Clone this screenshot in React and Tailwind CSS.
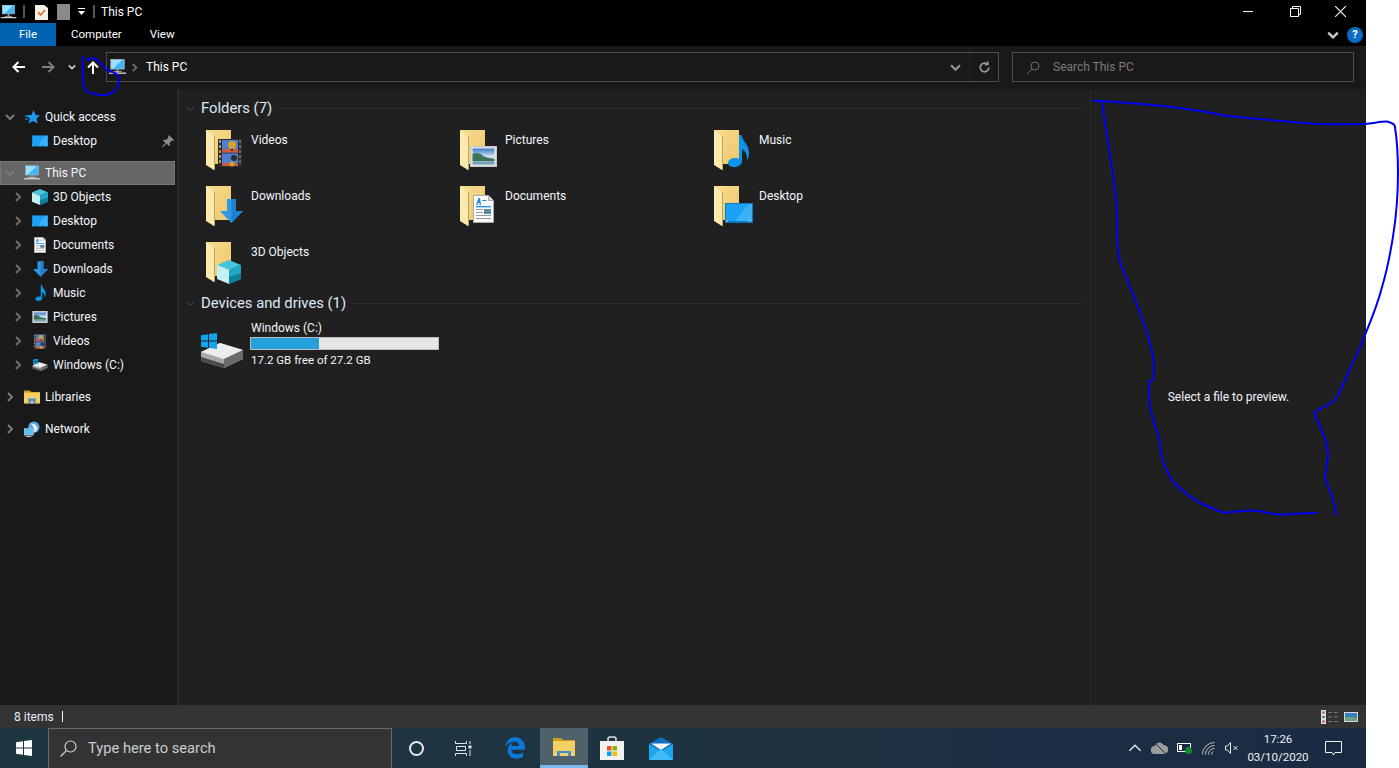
import { FaEdgeLegacy } from "react-icons/fa6";

const font = "font-['Roboto','Noto_Sans',sans-serif]";

function Chevron({ dir = "right", className = "", size = 10, width = 2 }) {
  const pts = {
    right: "3,1 7,5 3,9",
    down: "1,3 5,7 9,3",
    up: "1,7 5,3 9,7",
  };
  return (
    <svg className={className} width={size} height={size} viewBox="0 0 10 10" fill="none" stroke="currentColor" strokeWidth={width}>
      <polyline points={pts[dir]} />
    </svg>
  );
}

function Film(props) {
  return (
    <svg {...props} viewBox="0 0 24 28">
      <rect width="24" height="28" fill="#2c2c2c" />
      <rect x="4" y="1" width="16" height="12.500" fill="#4f7fd0" />
      <rect x="4" y="14.500" width="16" height="12.500" fill="#4f7fd0" />
      <rect x="4" y="10" width="16" height="3.500" fill="#d2593c" />
      <rect x="4" y="24" width="16" height="3" fill="#d2593c" />
      <circle cx="14" cy="6" r="4" fill="#d8a02a" />
      <rect x="13" y="10" width="2" height="2" fill="#2b2b2b" />
      <circle cx="16" cy="19" r="3" fill="#2b2b2b" />
      <circle cx="14" cy="25" r="2.500" fill="#d8a02a" />
      {[1, 6, 11, 16, 21].map((y) => (
        <g key={y}>
          <rect x="1" y={y} width="2" height="3" fill="#a89a6a" />
          <rect x="21" y={y} width="2" height="3" fill="#6b6b6b" />
        </g>
      ))}
    </svg>
  );
}

function Picture(props) {
  return (
    <svg {...props} viewBox="0 0 27 21">
      <defs>
        <linearGradient id="sky" x1="0" y1="0" x2="0" y2="1">
          <stop offset="0" stopColor="#3a78c0" />
          <stop offset="0.5" stopColor="#cfe3ee" />
          <stop offset="1" stopColor="#5e92a8" />
        </linearGradient>
      </defs>
      <rect width="27" height="21" fill="#c9c9c9" />
      <rect x="1.500" y="1.500" width="24" height="18" fill="#f4f4f4" />
      <rect x="2.500" y="2.500" width="22" height="16" fill="url(#sky)" />
      <path d="M2.500 8 C7 6 10 7 13 10 C17 12 21 12 24.500 13 V15 H2.500Z" fill="#3f7358" />
    </svg>
  );
}

function Note(props) {
  return (
    <svg {...props} viewBox="0 0 21 32">
      <path fill="#0a94e8" d="M11 0h2.500c.6 6 7.500 9 7.500 18 0 3-.8 5.500-2 7.500.6-6-1.800-9.500-5-11.500V26c0 3.500-3.500 6-7.500 6C3 32 0 30.500 0 28c0-3 3.500-5 7-5 1.500 0 3 .3 4 1Z" />
    </svg>
  );
}

function ArrowDown(props) {
  return (
    <svg {...props} viewBox="0 0 23 24">
      <polygon points="7,0 16,0 16,12 23,12 11.5,24 0,12 7,12" fill="#2f97e8" />
      <polygon points="11.500,0 16,0 16,12 23,12 11.500,24" fill="#1f7fd0" />
    </svg>
  );
}

function Doc(props) {
  return (
    <svg {...props} viewBox="0 0 21 28">
      <path d="M.5.5h15l5 5v22H.5Z" fill="#fafafa" stroke="#a9a9a9" />
      <path d="M15.500.5v5h5" fill="#dcdcdc" stroke="#a9a9a9" />
      <path d="M3 10 5.500 3H7l1 7H6.500v-2H5l-.7 2Z" fill="#1c8ee0" />
      <rect x="9.500" y="5" width="4" height="1" fill="#1c8ee0" />
      <rect x="3" y="11" width="15" height="1.300" fill="#1c8ee0" />
      <rect x="3" y="14" width="7" height="1" fill="#999" />
      <rect x="11" y="14" width="7" height="5" fill="#5b8aa0" />
      <rect x="3" y="17" width="7" height="1" fill="#999" />
      <rect x="3" y="20" width="15" height="1" fill="#999" />
      <rect x="3" y="23" width="15" height="1" fill="#999" />
    </svg>
  );
}

function Desk(props) {
  return (
    <svg {...props} viewBox="0 0 28 20">
      <rect width="28" height="20" fill="#0b78c6" />
      <rect x="1" y="1" width="26" height="17" fill="#1ba2f6" />
      <path d="M10 18 24 1h3v17Z" fill="#3db2f8" />
      <rect x="1" y="17.500" width="1.500" height="1" fill="#fff" />
      <rect x="23" y="17.500" width="1" height="1" fill="#fff" />
      <rect x="25" y="17.500" width="1" height="1" fill="#fff" />
    </svg>
  );
}

function Cube(props) {
  return (
    <svg {...props} viewBox="0 0 24 24">
      <polygon points="12,0 24,5 12,10 0,5" fill="#45c6dc" />
      <polygon points="0,5 12,10 12,24 0,19" fill="#c4f0f5" />
      <polygon points="24,5 12,10 12,24 24,19" fill="#1fa9c6" />
      <polygon points="12,17 24,13 24,19 12,24" fill="#0b8197" />
    </svg>
  );
}

function Monitor(props) {
  return (
    <svg {...props} viewBox="0 0 20 18">
      <rect x="2" y="0" width="16" height="11.500" fill="#45b6f5" stroke="#c4c4c4" strokeWidth=".6" />
      <path d="M2.500.500h13L5 11H2.500Z" fill="#9be0ff" />
      <rect x="9" y="11.500" width="2" height="3" fill="#9a9a9a" />
      <rect x="5" y="14" width="10" height="1" fill="#c8c8c8" />
      <rect x="0" y="15.500" width="20" height="1.500" fill="#dcdcdc" />
    </svg>
  );
}

function Folder() {
  return (
    <>
      <defs>
        <linearGradient id="fback" x1="0" y1="0" x2="1" y2="1">
          <stop offset="0" stopColor="#f7dc94" />
          <stop offset="1" stopColor="#eec768" />
        </linearGradient>
      </defs>
      <rect x="1" y="2" width="25" height="34" fill="url(#fback)" />
      <polygon points="1,2 9,8 9,42 1,37" fill="#fbe9ae" />
      <polygon points="9,8 10,8 10,42 9,42" fill="#c9a24e" />
    </>
  );
}

function FolderTile({ name, children }) {
  return (
    <div className="flex h-[46px] items-start">
      <svg width="44" height="46" viewBox="0 0 44 46" className="shrink-0">
        <Folder />
        {children}
      </svg>
      <span className="ml-[2px] mt-[4px] text-xs leading-4 text-[#f2f6fb]">{name}</span>
    </div>
  );
}

function WinPanes({ fill = "#fff", ...props }) {
  return (
    <svg {...props} viewBox="0 0 16 16" fill={fill}>
      <polygon points="0,2.200 7,1.200 7,7.500 0,7.500" />
      <polygon points="8,1 16,0 16,7.500 8,7.500" />
      <polygon points="0,8.500 7,8.500 7,14.800 0,13.800" />
      <polygon points="8,8.500 16,8.500 16,16 8,15" />
    </svg>
  );
}

function Drive({ small }) {
  return (
    <svg width={small ? 16 : 46} height={small ? 16 : 36} viewBox="0 0 46 36" className="shrink-0">
      <polygon points="2,19 21,10 44,17 44,26 25,35 2,28" fill="#a8a8a8" />
      <polygon points="2,19 21,10 44,17 25,26" fill="#ececec" />
      <polygon points="25,26 44,17 44,26 25,35" fill="#6a6a6a" />
      <polygon points="2,24 25,31 25,35 2,28" fill="#4a4a4a" />
      <circle cx="16" cy="27" r="1" fill="#37d04a" />
      <WinPanes x="2" y="0" width="16" height="16" fill="#10a5ee" />
    </svg>
  );
}

function LibIcon({ size = 16 }) {
  return (
    <svg width={size} height={size} viewBox="0 0 22 18">
      <path d="M0 0h8l2 2h12v2H0Z" fill="#d59d1c" />
      <rect y="3" width="22" height="15" fill="#f4cf63" />
      <path d="M6 18v-7h10v7h-3v-3.500H9V18Z" fill="#3f8fd6" />
    </svg>
  );
}

function NetIcon() {
  return (
    <svg width="17" height="17" viewBox="0 0 17 17">
      <circle cx="10.500" cy="6" r="6" fill="#5aa9dc" />
      <path d="M7 2c3 0 6 1 7 4s-2 5-4 6c2-3 1-6-3-10Z" fill="#e9f3f9" />
      <rect x="0" y="7.500" width="10" height="7" fill="#5fc0f2" stroke="#c0c0c0" strokeWidth=".6" />
      <rect x="2" y="15.500" width="6" height="1" fill="#d0d0d0" />
    </svg>
  );
}

const quickItems = [{ name: "Desktop", Icon: Desk, w: 16, h: 12, pin: true }];

const pcItems = [
  { name: "3D Objects", Icon: Cube, w: 16, h: 16 },
  { name: "Desktop", Icon: Desk, w: 16, h: 12 },
  { name: "Documents", Icon: Doc, w: 12, h: 16 },
  { name: "Downloads", Icon: ArrowDown, w: 15, h: 16 },
  { name: "Music", Icon: Note, w: 11, h: 16 },
  { name: "Pictures", Icon: Picture, w: 16, h: 12 },
  { name: "Videos", Icon: Film, w: 14, h: 15 },
];

function NavChild({ name, children, arrow = true, pin }) {
  return (
    <div className="flex h-6 items-center pl-3">
      <span className="flex w-3 shrink-0 justify-center text-[#6e6e6e]">{arrow && <Chevron />}</span>
      <span className="ml-2 flex w-4 shrink-0 items-center justify-center">{children}</span>
      <span className="ml-[5px] text-xs text-[#f2f6fb]">{name}</span>
      {pin && (
        <svg className="ml-auto mr-[3px]" width="12" height="12" viewBox="0 0 12 12" fill="#8b8b8b">
          <path d="M7 0l5 5-1 1-1-.500-2.500 2.500.5 2-1 1-2.500-2.500L1 12l-1 0 0-.500 3.500-3.500L1 5.500l1-1 2 .500L6.500 2.500 6 1.500Z" />
        </svg>
      )}
    </div>
  );
}

function NavRoot({ name, open, selected, icon }) {
  return (
    <div className={`flex h-6 items-center pl-1 ${selected ? "mr-[2px] border border-[#777] bg-[#666] pl-[3px]" : ""}`}>
      <span className="flex w-3 shrink-0 justify-center text-[#7a7a7a]">
        <Chevron dir={open ? "down" : "right"} />
      </span>
      <span className="ml-2 flex w-4 shrink-0 items-center justify-center">{icon}</span>
      <span className="ml-[5px] text-xs text-[#f2f6fb]">{name}</span>
    </div>
  );
}

function Sidebar() {
  return (
    <div className="w-[177px] shrink-0 bg-[#191919] pt-4">
      <NavRoot
        name="Quick access"
        open
        icon={
          <svg width="15" height="14" viewBox="0 0 15 14">
            <polygon points="8.500,0 10.500,5 15,5.500 11.500,8.500 12.500,13.500 8,11 3.500,13.500 4.800,8.500 1,5.500 6.500,5" fill="#1c9bf0" />
            <path d="M0 6h4M0 9h3" stroke="#1c9bf0" />
          </svg>
        }
      />
      {quickItems.map(({ name, Icon, w, h, pin }) => (
        <NavChild key={name} name={name} arrow={false} pin={pin}>
          <Icon width={w} height={h} />
        </NavChild>
      ))}
      <div className="mt-2">
        <NavRoot name="This PC" open selected icon={<Monitor width="17" height="16" />} />
      </div>
      {pcItems.map(({ name, Icon, w, h }) => (
        <NavChild key={name} name={name}>
          <Icon width={w} height={h} />
        </NavChild>
      ))}
      <NavChild name="Windows (C:)">
        <Drive small />
      </NavChild>
      <div className="mt-2">
        <NavRoot name="Libraries" icon={<LibIcon />} />
      </div>
      <div className="mt-2">
        <NavRoot name="Network" icon={<NetIcon />} />
      </div>
    </div>
  );
}

function SectionHead({ title }) {
  return (
    <div className="flex h-[22px] items-center">
      <span className="ml-[7px] flex w-[15px] text-[#555]">
        <Chevron dir="down" size={9} width={1} />
      </span>
      <span className="text-[14.800px] leading-[22px] text-[#dfeaf5]">{title}</span>
      <span className="ml-[6px] h-px flex-1 bg-[#2f2f2f]" />
    </div>
  );
}

function Content() {
  return (
    <div className="min-w-0 flex-1 bg-[#202020] pl-0 pr-[7px] pt-2">
      <SectionHead title="Folders (7)" />
      <div className="mt-[9px] grid grid-cols-[254px_254px_254px] gap-y-[10px] pl-[26px]">
        <FolderTile name="Videos">
          <Film x="13" y="11" width="24" height="28" />
        </FolderTile>
        <FolderTile name="Pictures">
          <Picture x="11" y="18" width="27" height="21" />
        </FolderTile>
        <FolderTile name="Music">
          <Note x="15" y="7" width="21" height="32" />
        </FolderTile>
        <FolderTile name="Downloads">
          <ArrowDown x="15" y="15" width="23" height="24" />
        </FolderTile>
        <FolderTile name="Documents">
          <Doc x="14" y="11" width="21" height="28" />
        </FolderTile>
        <FolderTile name="Desktop">
          <Desk x="12" y="19" width="28" height="20" />
        </FolderTile>
        <FolderTile name="3D Objects">
          <Cube x="12" y="20" width="24" height="24" />
        </FolderTile>
      </div>
      <div className="mt-[6px]">
        <SectionHead title="Devices and drives (1)" />
      </div>
      <div className="ml-5 mt-[6px] flex items-start">
        <div className="mt-[13px]">
          <Drive />
        </div>
        <div className="ml-[5px] text-xs leading-4 text-[#f2f6fb]">
          <div className="pl-px">Windows (C:)</div>
          <div className="mt-px h-[13px] w-[189px] border border-[#bcbcbc] bg-[#e6e6e6]">
            <div className="h-full w-[36.500%] bg-[#26a0da]" />
          </div>
          <div className="mt-[2px] pl-px text-[11.500px]">17.2 GB free of 27.2 GB</div>
        </div>
      </div>
    </div>
  );
}

function TitleBar() {
  return (
    <div className="flex h-[23px] items-center bg-black text-white">
      <Monitor width="17" height="14" />
      <span className="ml-[6px] h-[13px] w-[2px] bg-[#555]" />
      <svg className="ml-[10px]" width="13" height="16" viewBox="0 0 13 16">
        <path d="M0 1h9l4 3v12H0Z" fill="#f5f1e6" />
        <path d="M3 8l2.500 3L10 6" fill="none" stroke="#e8642c" strokeWidth="1.500" />
      </svg>
      <span className="ml-[9px] h-[16px] w-[13px] bg-[#8a8a8a]" />
      <span className="ml-[5px] flex w-[12px] flex-col items-center">
        <span className="h-px w-[7px] bg-white" />
        <svg className="mt-[2px]" width="7" height="4" viewBox="0 0 7 4" fill="#fff">
          <polygon points="0,0 7,0 3.500,4" />
        </svg>
      </span>
      <span className="ml-[6px] h-[13px] w-[2px] bg-[#555]" />
      <span className="ml-[6px] text-xs">This PC</span>
      <div className="ml-auto flex items-center">
        <span className="h-px w-[10px] bg-white" />
        <svg className="ml-[37px]" width="11" height="11" viewBox="0 0 11 11" fill="none" stroke="#fff">
          <path d="M.5 2.500h8v8h-8ZM2.500 2.500v-2h8v8h-2" />
        </svg>
        <svg className="ml-[34px] mr-[20px]" width="11" height="11" viewBox="0 0 11 11" fill="none" stroke="#fff" strokeWidth="1.100">
          <path d="M0 0l11 11M11 0 0 11" />
        </svg>
      </div>
    </div>
  );
}

function RibbonTabs() {
  return (
    <div className="flex h-[23px] items-center bg-black text-[11.500px] text-white">
      <div className="flex h-full w-[56px] items-center justify-center bg-[#0063b1]">File</div>
      <span className="ml-[15px]">Computer</span>
      <span className="ml-[28px]">View</span>
      <div className="ml-auto flex items-center">
        <Chevron dir="down" size={12} className="text-[#c8c8c8]" />
        <span className="ml-[8px] mr-[3px] flex h-4 w-4 items-center justify-center rounded-full bg-[#0a6cc4] text-[11px] font-bold leading-none">?</span>
      </div>
    </div>
  );
}

function AddressRow() {
  return (
    <div className="flex h-[43px] items-center bg-[#191919] pb-px text-white">
      <svg className="ml-[12px]" width="13" height="12" viewBox="0 0 13 12" fill="none" stroke="#fff" strokeWidth="2">
        <path d="M13 6H2M6.500 1 1.500 6l5 5" />
      </svg>
      <svg className="ml-[17px]" width="13" height="12" viewBox="0 0 13 12" fill="none" stroke="#7c7c7c" strokeWidth="2">
        <path d="M0 6h11M6.500 1l5 5-5 5" />
      </svg>
      <Chevron dir="down" size={8} className="ml-[13px] text-[#d0d0d0]" />
      <svg className="ml-[11px]" width="12" height="13" viewBox="0 0 12 13" fill="none" stroke="#fff" strokeWidth="2">
        <path d="M6 13V2M1 6.500l5-5 5 5" />
      </svg>
      <div className="ml-[7px] flex h-[30px] w-[893px] items-center border border-[#4d4d4d] pl-[2px]">
        <Monitor width="17" height="16" />
        <Chevron size={9} className="ml-[4px] text-[#6e6e6e]" />
        <span className="ml-[7px] text-xs">This PC</span>
        <Chevron dir="down" size={11} className="ml-auto text-[#9a9a9a]" />
        <span className="ml-[8px] h-full w-px bg-[#262626]" />
        <svg className="ml-[8px] mr-[7px]" width="13" height="13" viewBox="0 0 24 24" fill="none" stroke="#9a9a9a" strokeWidth="3">
          <path d="M20 12a8 8 0 1 1-3-6.200" />
          <path d="M18 1v5.500h-5.500" />
        </svg>
      </div>
      <div className="ml-[13px] flex h-[30px] w-[342px] items-center border border-[#4d4d4d]">
        <svg className="ml-[14px]" width="13" height="13" viewBox="0 0 13 13" fill="none" stroke="#6e6e6e">
          <circle cx="8" cy="5" r="4" />
          <path d="M5 8l-5 5" />
        </svg>
        <span className="ml-[13px] text-xs text-[#7a7a7a]">Search This PC</span>
      </div>
    </div>
  );
}

function StatusBar() {
  return (
    <div className="flex h-[23px] items-center bg-[#333] text-xs text-[#e8eef5]">
      <span className="ml-[14px]">8 items</span>
      <span className="ml-[8px] h-[11px] w-px bg-white" />
      <div className="ml-auto mr-2 flex items-center">
        <svg width="18" height="14" viewBox="0 0 18 14">
          <rect width="5" height="14" fill="#ddd" />
          <rect x="1.500" y="1.500" width="2" height="2" fill="#b33" />
          <rect x="1.500" y="6" width="2" height="2" fill="#555" />
          <rect x="1.500" y="10.500" width="2" height="2" fill="#b33" />
          <path d="M7 2.500h4M13 2.500h4M7 7h4M13 7h4M7 11.500h4M13 11.500h4" stroke="#777" />
        </svg>
        <svg className="ml-[5px]" width="14" height="10" viewBox="0 0 14 10">
          <rect width="14" height="10" fill="#d8d8d8" />
          <rect x="1" y="1" width="12" height="8" fill="#2e80c0" />
          <path d="M1 6c3-2 6-1 12 0v3H1Z" fill="#6f9f80" />
        </svg>
      </div>
    </div>
  );
}

function Taskbar() {
  return (
    <div className="flex h-10 items-stretch bg-gradient-to-r from-[#1e3640] via-[#1e3340] to-[#1a2a44] text-white">
      <div className="flex w-12 items-center justify-center">
        <WinPanes width="16" height="16" />
      </div>
      <div className="flex w-[344px] items-center border border-b-0 border-[#6a6a6a] bg-[#333]">
        <svg className="ml-[11px]" width="17" height="17" viewBox="0 0 17 17" fill="none" stroke="#d0d0d0" strokeWidth="1.200">
          <circle cx="10.500" cy="6.500" r="5.500" />
          <path d="M6.500 10.500l-6 6" />
        </svg>
        <span className="ml-[11px] text-[14.700px] text-[#c8ccd0]">Type here to search</span>
      </div>
      <div className="flex w-12 items-center justify-center">
        <span className="h-[15px] w-[15px] rounded-full border-2 border-[#e8e8e8]" />
      </div>
      <div className="flex w-[46px] items-center justify-center">
        <svg width="17" height="15" viewBox="0 0 17 15" fill="none" stroke="#e8e8e8">
          <path d="M.5 0v2.500h11V0M.5 15v-2.500h11V15M1.500 5.500h9v4h-9Z" />
          <rect x="13.500" y="4.500" width="3" height="3" fill="#e8e8e8" stroke="none" />
          <path d="M15 0v3M15 9v6" />
        </svg>
      </div>
      <div className="flex w-[54px] items-center justify-center pl-1">
        <FaEdgeLegacy className="text-[22px] text-[#0b78d7]" />
      </div>
      <div className="flex w-[48px] items-center justify-center border-b-[3px] border-[#76b9ed] bg-[#4f626c]">
        <svg width="22" height="18" viewBox="0 0 22 18">
          <path d="M0 0h8l2 2h12v2H0Z" fill="#d59d1c" />
          <rect y="3" width="22" height="15" fill="#f4cf63" />
          <path d="M4 18v-5h14v5h-3v-3H7v3Z" fill="#3f8fd6" />
        </svg>
      </div>
      <div className="flex w-[48px] items-center justify-center">
        <svg width="24" height="24" viewBox="0 0 24 24">
          <path d="M8 6V3a2 2 0 0 1 2-2h4a2 2 0 0 1 2 2v3" fill="none" stroke="#e0e0e0" strokeWidth="1.500" />
          <rect y="5" width="24" height="19" fill="#f1f1f1" />
          <rect x="7" y="10" width="4.500" height="4.500" fill="#f25022" />
          <rect x="12.500" y="10" width="4.500" height="4.500" fill="#7fba00" />
          <rect x="7" y="15.500" width="4.500" height="4.500" fill="#00a4ef" />
          <rect x="12.500" y="15.500" width="4.500" height="4.500" fill="#ffb900" />
        </svg>
      </div>
      <div className="flex w-[50px] items-center justify-center">
        <svg width="24" height="23" viewBox="0 0 24 23">
          <polygon points="0,7 12,0 24,7 12,14" fill="#0f6fc6" />
          <polygon points="2,6.500 22,6.500 12,13" fill="#eef4fa" />
          <polygon points="0,7 12,14 24,7 24,23 0,23" fill="#1ba7ee" />
          <polygon points="0,23 12,12 24,23" fill="#3fbcf5" />
        </svg>
      </div>
      <div className="ml-auto flex items-center">
        <Chevron dir="up" size={14} width={1} className="text-[#e8e8e8]" />
        <svg className="ml-[9px]" width="17" height="12" viewBox="0 0 17 12">
          <path d="M4 12a4 4 0 0 1-.5-8A5 5 0 0 1 12.500 3 4.500 4.500 0 0 1 13 12Z" fill="#9c9c9c" />
          <path d="M3 0l12 12" stroke="#1d2b42" strokeWidth="1" />
        </svg>
        <svg className="ml-[9px]" width="16" height="12" viewBox="0 0 16 12">
          <rect x=".5" y="1.500" width="13" height="8" fill="none" stroke="#fff" />
          <rect x="2" y="3" width="3" height="5" fill="#fff" />
          <circle cx="11.500" cy="8.500" r="3.500" fill="#0d8a2a" />
        </svg>
        <svg className="ml-[9px]" width="14" height="13" viewBox="0 0 14 13" fill="none" stroke="#bdbdbd">
          <path d="M.5 12.500a12 12 0 0 1 12-12M3.500 12.500a9 9 0 0 1 9-9M6.500 12.500a6 6 0 0 1 6-6M9.500 12.500a3 3 0 0 1 2-2.800" />
        </svg>
        <svg className="ml-[9px]" width="14" height="12" viewBox="0 0 14 12" fill="none" stroke="#e8e8e8">
          <path d="M.5 4v4h2l3 3.500V.5l-3 3.500ZM8.500 4l4 4M12.500 4l-4 4" />
        </svg>
        <div className="ml-[3px] flex w-[72px] flex-col items-center text-[11.500px] leading-[18px] text-[#f0f0f0]">
          <span>17:26</span>
          <span>03/10/2020</span>
        </div>
        <svg className="ml-[11px] mr-[24px]" width="17" height="15" viewBox="0 0 17 15" fill="none" stroke="#f0f0f0">
          <path d="M.5.5h16v11H10L8.500 14 7 11.500H.5Z" />
        </svg>
      </div>
    </div>
  );
}

export default function App() {
  return (
    <div className={`relative flex h-[768px] w-[1399px] overflow-hidden bg-white ${font}`}>
      <div className="flex w-[1366px] flex-col">
        <TitleBar />
        <RibbonTabs />
        <AddressRow />
        <div className="flex h-[616px] min-h-0">
          <Sidebar />
          <div className="w-[2px] shrink-0 bg-[#2b2b2b]" />
          <Content />
          <div className="flex w-[276px] shrink-0 items-center justify-center border-l border-[#2b2b2b] bg-[#202020] text-xs text-[#f2f6fb]">
            Select a file to preview.
          </div>
        </div>
        <StatusBar />
        <Taskbar />
      </div>
      {/* pen scribbles on top of the window */}
      <svg className="pointer-events-none absolute left-0 top-0" width="1399" height="768" fill="none" stroke="#0000f0" strokeWidth="2" strokeLinecap="round" strokeLinejoin="round">
        <path d="M1093 100.700 C1140 103 1190 108 1225 115.700 C1260 119 1290 122 1318 124 C1335 124.500 1350 124.500 1365 124 C1375 123 1384 121 1388 121.700 C1393 123 1395 125 1395 127 C1397 140 1398 155 1398 173 C1398 195 1396 218 1393 236.700 C1390 255 1387 271 1382 287 C1378 303 1372 318 1365 335 C1360 348 1354 361 1348 373 C1344 382 1340 393 1335 400 C1329 405 1321 408 1315 411.700 C1315 415 1316 419 1318 421.700 C1323 432 1327 442 1328 453 C1328 462 1325 470 1325 476.700 C1327 485 1331 492 1333 500 C1335 505 1335.700 510 1335.700 515" />
        <path d="M1101.700 100.700 C1105 125 1110 150 1113 176.700 C1115 190 1117 205 1117 216.700 C1117 230 1117 240 1118 250 C1118 256 1120 262 1121.700 266.700 C1128 282 1135 298 1140 313 C1145 326 1149 338 1151.700 350 C1153 356 1154 361 1154 366.700 C1154 372 1153.500 377 1152.700 380 L1149 381.700 C1149 390 1149 398 1150 406.700 C1152 418 1156 428 1159 438 C1160 446 1161 454 1163 461.700 C1166 469 1169 476 1173 481.700 C1180 489 1189 496 1198 501.700 C1207 506 1216 511 1225 512.700 C1235 512 1245 510 1255 510.700 C1264 511 1272 515 1281.700 514.700 C1293 514 1305 513 1316.700 512.700" />
        <path d="M82.700 57 C82.500 65 82.500 72 83 80 C83.500 85 84.500 89 86 90.700 C92 94 100 95.500 106.700 95 C113 93 118 89 119 83 C119.500 80 119 77 118 75 C114 72 110 71 106.700 70 C104 68 102 65 100 63 C97 60 95 58 93 58 C91 58 89 59 87 60" />
      </svg>
    </div>
  );
}
